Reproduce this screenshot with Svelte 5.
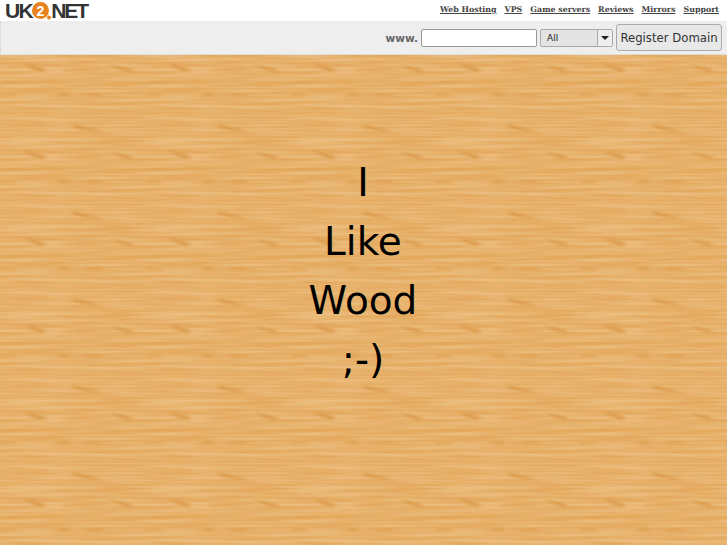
<script>
  const links = ["Web Hosting", "VPS", "Game servers", "Reviews", "Mirrors", "Support"];
  const lines = ["I", "Like", "Wood", ";-)"];
</script>

<div class="page">
  <header>
    <div class="top">
      <div class="logo">
        <span>UK</span>
        <svg width="19" height="20" viewBox="0 0 19 20" aria-hidden="true">
          <circle cx="8.5" cy="9.5" r="8.5" fill="#e8821e" />
          <circle cx="17" cy="16.5" r="2" fill="#e8821e" />
          <text x="8.5" y="15" text-anchor="middle" class="two">2</text>
        </svg>
        <span class="net">NET</span>
      </div>
      <nav>
        {#each links as link}
          <a href="#top">{link}</a>
        {/each}
      </nav>
    </div>
    <form class="domain" on:submit|preventDefault>
      <b>www.</b>
      <input type="text" />
      <div class="select"><span>All</span><i><em></em></i></div>
      <button>Register Domain</button>
    </form>
  </header>

  <main>
    <svg class="wood" width="100%" height="100%" aria-hidden="true">
      <defs>
        <filter id="grain" x="0" y="0" width="100%" height="100%">
          <feTurbulence type="fractalNoise" baseFrequency="0.02 0.42" numOctaves="3" seed="4" stitchTiles="stitch" />
          <feColorMatrix values="0 0 0 0 0.80  0 0 0 0 0.50  0 0 0 0 0.18  1.2 0 0 0 -0.42" />
        </filter>
        <filter id="shine" x="0" y="0" width="100%" height="100%">
          <feTurbulence type="fractalNoise" baseFrequency="0.015 0.3" numOctaves="2" seed="11" stitchTiles="stitch" />
          <feColorMatrix values="0 0 0 0 0.95  0 0 0 0 0.75  0 0 0 0 0.48  0.9 0 0 0 -0.32" />
        </filter>
        <filter id="soft"><feGaussianBlur stdDeviation="2.5 1" /></filter>
        <pattern id="tile" width="145" height="87" patternUnits="userSpaceOnUse">
          <rect width="145" height="87" fill="#e4a85e" />
          <rect width="145" height="87" filter="url(#shine)" />
          <rect width="145" height="87" filter="url(#grain)" />
          <g filter="url(#soft)">
            <path d="M24 9 Q36 11 44 14 Q46 16 43 17 Q32 15 24 9Z" fill="#d48f3a" opacity="0.7" />
            <path d="M108 9 Q122 12 131 14 Q133 16 130 17 Q118 15 108 9Z" fill="#d48f3a" opacity="0.7" />
            <path d="M46 15 Q54 12 66 14 Q56 20 46 19Z" fill="#eebd80" opacity="0.6" />
            <rect x="58" y="38" width="11" height="3" fill="#d48f3a" opacity="0.5" />
            <rect x="86" y="39" width="16" height="2" fill="#d48f3a" opacity="0.4" />
            <rect x="0" y="39" width="16" height="2" fill="#d48f3a" opacity="0.4" />
            <path d="M73 69 Q88 74 102 76 Q88 77 73 72Z" fill="#d48f3a" opacity="0.7" />
            <path d="M38 67 Q56 64 72 68 Q56 69 38 67Z" fill="#eebd80" opacity="0.7" />
            <rect x="0" y="26" width="145" height="2" fill="#d9993f" opacity="0.35" />
          </g>
        </pattern>
      </defs>
      <rect width="100%" height="100%" fill="url(#tile)" />
    </svg>
    <div class="message">
      {#each lines as line}
        <p>{line}</p>
      {/each}
    </div>
  </main>
</div>

<style>
  :global(body) {
    overflow: hidden;
  }

  .page {
    width: 727px;
    height: 545px;
    display: flex;
    flex-direction: column;
    font-family: "DejaVu Sans", sans-serif;
  }

  .top {
    height: 21px;
    background: #fff;
    display: flex;
    justify-content: space-between;
    align-items: center;
    padding: 0 8px 0 5px;
  }

  .logo {
    display: flex;
    align-items: center;
    font-family: "Liberation Sans", sans-serif;
    font-size: 21px;
    font-weight: bold;
    line-height: 20px;
    color: #333;
    letter-spacing: -1.6px;
  }

  .net {
    letter-spacing: -2px;
  }

  .two {
    font: bold 14px "Liberation Sans", sans-serif;
    letter-spacing: 0;
    fill: #fff;
  }

  nav {
    display: flex;
    gap: 8px;
    padding-bottom: 2px;
  }

  nav a {
    font-family: "DejaVu Serif", serif;
    font-size: 7.9px;
    font-weight: bold;
    color: #444;
  }

  .domain {
    height: 33px;
    background: #eee;
    border-left: 1px solid #ddd;
    border-bottom: 1px solid #ddd;
    display: flex;
    justify-content: flex-end;
    align-items: center;
    gap: 3px;
    padding-right: 5px;
  }

  .domain b {
    font-size: 10.5px;
    color: #666;
  }

  input {
    width: 116px;
    height: 18px;
    box-sizing: border-box;
    border: 1px solid #999;
    border-radius: 2px;
    background: #fff;
    padding: 0;
  }

  .select {
    width: 73px;
    height: 18px;
    box-sizing: border-box;
    border: 1px solid #aaa;
    border-radius: 2px;
    background: #e4e4e4;
    display: flex;
    justify-content: space-between;
    align-items: center;
    font-size: 9px;
    color: #222;
    padding-left: 6px;
  }

  .select i {
    width: 14px;
    height: 100%;
    border-left: 1px solid #aaa;
    background: #eee;
    display: flex;
    align-items: center;
    justify-content: center;
  }

  .select em {
    border: 4px solid transparent;
    border-top-color: #222;
    border-bottom-width: 0;
  }

  button {
    width: 106px;
    height: 27px;
    box-sizing: border-box;
    border: 1px solid #aaa;
    border-radius: 3px;
    background: #e8e8e8;
    font-family: "DejaVu Sans", sans-serif;
    font-size: 11.7px;
    white-space: nowrap;
    color: #333;
    padding: 0;
  }

  main {
    flex: 1;
    position: relative;
    display: flex;
    justify-content: center;
  }

  .wood {
    position: absolute;
    inset: 0;
  }

  .message {
    position: relative;
    padding-top: 98px;
    padding-right: 1px;
    text-align: center;
    font-size: 39px;
    color: #000;
  }

  p {
    margin: 0;
    height: 59px;
    line-height: 59px;
  }
</style>
